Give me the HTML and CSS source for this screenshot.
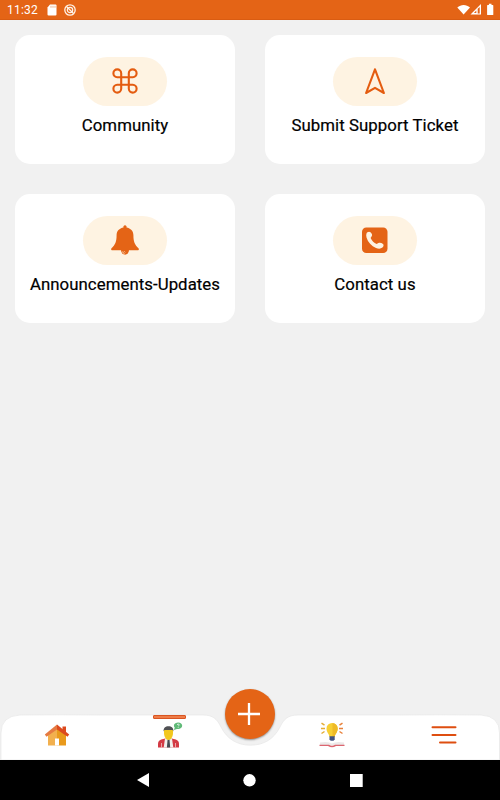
FILE: index.html
```html
<!DOCTYPE html>
<html lang="en">
<head>
    <meta charset="UTF-8">
    <title>Support</title>
    <link rel="stylesheet" href="styles.css">
</head>
<body>
<div id="screen">
    <div class="status">
        <span class="time">11:32</span>
        <svg class="sd" width="10" height="12" viewBox="0 0 10 12">
            <path d="M3 0.5h5.5a1 1 0 0 1 1 1v9a1 1 0 0 1-1 1h-7a1 1 0 0 1-1-1V3.5z" fill="#fff"/>
            <path d="M4 1.8v2M6 1.8v2M8 1.8v2" stroke="#e8a070" stroke-width="0.8"/>
        </svg>
        <svg class="sync" width="12" height="12" viewBox="0 0 12 12" fill="none" stroke="#fff3e8">
            <circle cx="6" cy="6" r="5.2" stroke-width="1.3"/>
            <circle cx="6" cy="6" r="2.7" stroke-width="1.2"/>
            <path d="M2.5 2.5l7 7" stroke-width="1.3"/>
        </svg>
        <svg class="signals" width="38" height="14" viewBox="0 0 38 14">
            <path d="M0.3 4.6C3.9 1.2 9.4 1.2 13 4.6L6.6 11.6z" fill="#fff"/>
            <path d="M24 1v10.5H13.5z" fill="#fff"/>
            <path d="M19.3 7.5v2.5h-2.4z" fill="#e46416"/>
            <path d="M20.7 5.8v4.8h2V4z" fill="#e46416"/>
            <path d="M30.7 2h1.2V0.8h2.6V2h1.2q.6 0 .6.6v8.8q0 .6-.6.6h-5q-.6 0-.6-.6V2.6q0-.6.6-.6z" fill="#fff"/>
        </svg>
    </div>

    <div class="cards">
        <div class="card">
            <div class="pill">
                <svg width="26" height="26" viewBox="0 0 26 26" fill="none" stroke="#e45c10" stroke-width="2.1">
                    <path d="M9.2 9.2h7.6v7.6H9.2zM9.2 9.2H5.2A3.9 3.9 0 1 1 9.2 5.2zM16.8 9.2V5.2a3.9 3.9 0 1 1 4 4zM16.8 16.8h4a3.9 3.9 0 1 1-4 4zM9.2 16.8v4a3.9 3.9 0 1 1-4-4z"/>
                </svg>
            </div>
            <p>Community</p>
        </div>
        <div class="card">
            <div class="pill">
                <svg width="24" height="28" viewBox="0 0 24 28" fill="none" stroke="#e45c10" stroke-width="2.1" stroke-linejoin="round">
                    <path d="M12 2.3L3.1 26L12 20.9L20.9 26z"/>
                </svg>
            </div>
            <p>Submit Support Ticket</p>
        </div>
        <div class="card">
            <div class="pill">
                <svg width="28" height="32" viewBox="0 0 28 32">
                    <path d="M14 1.2a1.6 1.6 0 0 1 1.5 2.2C19.6 4.1 22.4 7 22.4 11c0 7 1.4 9.7 5.1 13.3.7.9.3 2-.8 2H1.3c-1.1 0-1.5-1.1-.8-2C4.2 20.7 5.6 18 5.6 11c0-4 2.8-6.9 6.9-7.6A1.6 1.6 0 0 1 14 1.2z" fill="#e46416"/>
                    <path d="M10 26h8a4 4.7 0 0 1-8 0z" fill="#e46416"/>
                    <path d="M11.5 27.5q.4 1.8 2.2 2.4M13 27.2l1.2 1.2" fill="none" stroke="#fef3e2" stroke-width="0.7"/>
                </svg>
            </div>
            <p>Announcements-Updates</p>
        </div>
        <div class="card">
            <div class="pill">
                <svg width="26" height="26" viewBox="0 0 26 26">
                    <rect x="0" y="0.4" width="25.5" height="25.6" rx="4.3" fill="#e46416"/>
                    <path d="M4.5 6.5C5 4.8 7.2 4 8.5 5.2c1.3 1.1 2.2 2.7 1.2 4.1L8.6 11c1.4 3 3.4 4.8 6 5.9l1.8-1c1.6-.6 3.2 0 4.6 1 1 1 .6 2.7-.6 3.7-1.6 1.3-4 1.4-6.4.3C9.4 18.9 6 15.3 4.5 10.4c-.4-1.4-.4-2.7 0-3.9z" fill="#fef3e2"/>
                </svg>
            </div>
            <p>Contact us</p>
        </div>
    </div>

    <div class="tabbar">
        <svg class="tabbar-bg" width="500" height="47" viewBox="0 0 500 47">
            <path d="M1 47V20Q1 3 20 2Q60 1.6 100 2H203C213 2 217 6 221 14C227 26 237 32.2 250.5 32.2S274 26 280 14C284 6 288 2 298 2H400Q440 1.6 481 2Q499.5 3 499.5 20V47z" fill="#fff" stroke="#e6e6e6" stroke-width="0.7"/>
        </svg>
        <div class="tab">
            <svg width="26" height="22" viewBox="0 0 26 22">
                <path d="M18.5 2.5h3.5v7h-3.5z" fill="#dc4a1e"/>
                <path d="M4 10.5L13 3v18.5H4z" fill="#f2b04e"/>
                <path d="M13 3l9 7.5v11h-9z" fill="#e99a1c"/>
                <path d="M11 14.5h4v7h-4z" fill="#fff"/>
                <path d="M13 0.5v5L2.5 12.8 0.8 10.5z" fill="#e57a42"/>
                <path d="M13 0.5v5l10.5 7.3 1.7-2.3z" fill="#dc4a1e"/>
            </svg>
        </div>
        <div class="tab selected">
            <svg width="26" height="26" viewBox="0 0 26 26">
                <path d="M1 25.5v-3.3c0-3.6 2.5-4.6 7-5.6h7c4.5 1 7 2 7 5.6v3.3z" fill="#d33a44"/>
                <path d="M4.5 21v4.5M18.5 21v4.5" stroke="#ecc0c2" stroke-width="0.8"/>
                <path d="M8 16.5h7l1.3 9H6.7z" fill="#f2f0ed"/>
                <path d="M10.6 17.5h1.9l.7 8h-3.3z" fill="#454b52"/>
                <path d="M7 8h9v3c0 3.6-2 7-4.5 7S7 14.6 7 11z" fill="#f2c71f"/>
                <path d="M6.6 9.5C6.3 6 8.4 4.3 11.5 4.3s5.2 1.7 4.9 5.2L15.6 8H7.4z" fill="#505154"/>
                <path d="M17 8l.7-2.4C15.7 3 18 .6 21 .5c2.7 0 4.2 1.3 4.2 3.3 0 2.2-2.3 3.5-5.2 3.1z" fill="#60ba78"/>
                <path d="M20 2.6q1.4-1 2.2 0 .2.9-.9 1.4M21.2 5.1v.7" fill="none" stroke="#fff" stroke-width="0.8"/>
            </svg>
        </div>
        <button class="fab">
            <svg width="22" height="22" viewBox="0 0 22 22"><path d="M11 0v22M0 11h22" stroke="#fff" stroke-width="2.3"/></svg>
        </button>
        <div class="tab">
            <svg width="26" height="26" viewBox="0 0 26 26">
                <path d="M1 20.5q8-1.5 12 1 4-2.5 12-1v2.8H1z" fill="#ece9e9"/>
                <path d="M0.5 22.7H10q3 2.2 6 0h9.5v1.2H17q-4 2.6-8 0H.5z" fill="#dc6670"/>
                <path d="M7.5 6.5a5.6 5.6 0 0 1 11.2 0c0 4-2.9 5.5-3 8.5h-5.2c-.1-3-3-4.5-3-8.5z" fill="#f7cf34"/>
                <path d="M13.5 1a5.6 5.6 0 0 1 5.2 5.5c0 4-2.9 5.5-3 8.5h-2.2z" fill="#eeba27"/>
                <path d="M10.5 14.2h5.2v3.3l-1.2 1.2h-2.8l-1.2-1.2z" fill="#405282"/>
                <path d="M2.5 1.2l3 2M2 6.5h4M2.5 11.5l3-2" stroke="#e5ad35" stroke-width="1.5"/>
                <path d="M23.5 1.2l-3 2M24 6.5h-4M23.5 11.5l-3-2" stroke="#e8813b" stroke-width="1.5"/>
            </svg>
        </div>
        <div class="tab">
            <svg width="26" height="20" viewBox="0 0 26 20" stroke="#de4e10" stroke-width="2" stroke-linecap="round">
                <path d="M1.5 2.2h23M1.5 9.9h23M9 17.6h15.5"/>
            </svg>
        </div>
    </div>

    <div class="sysnav">
        <svg width="12" height="14" viewBox="0 0 12 14"><path d="M12 0v14L0 7z" fill="#fff"/></svg>
        <svg width="13" height="13" viewBox="0 0 13 13"><circle cx="6.5" cy="6.3" r="6.2" fill="#fff"/></svg>
        <svg width="13" height="13" viewBox="0 0 13 13"><rect width="12.7" height="13" fill="#fff"/></svg>
    </div>
</div>
</body>
</html>
```
FILE: styles.css
```css
*{
    margin: 0;
    padding: 0;
    box-sizing: border-box;
}
body{
    font-family: Roboto, sans-serif;
    background: #f1f1f1;
}
svg{
    display: block;
}
#screen{
    width: 500px;
    height: 800px;
    display: flex;
    flex-direction: column;
    overflow: hidden;
}
.status{
    height: 20px;
    padding: 0 5px 0 7px;
    display: flex;
    align-items: center;
    background: #e46416;
    border-bottom: 1px solid #d95c12;
    color: #fff;
}
.time{
    width: 40px;
    font-size: 12px;
    line-height: 20px;
    letter-spacing: 0.2px;
}
.sync{
    margin-left: 7px;
}
.signals{
    margin-left: auto;
}
.cards{
    flex: 1;
    display: grid;
    grid-template-columns: 220px 220px;
    grid-auto-rows: 129px;
    gap: 30px;
    padding: 15px;
    align-content: start;
}
.card{
    display: flex;
    flex-direction: column;
    align-items: center;
    padding-top: 22px;
    background: #fff;
    border-radius: 15px;
}
.pill{
    width: 84px;
    height: 48.5px;
    padding-bottom: 0.5px;
    display: flex;
    align-items: center;
    justify-content: center;
    background: #fef3e2;
    border-radius: 25px;
}
.card p{
    margin-top: 9.5px;
    font-size: 16.8px;
    font-weight: 400;
    line-height: 21px;
    letter-spacing: 0.06px;
    white-space: nowrap;
    color: #000;
    -webkit-text-stroke: 0.2px #000;
}
.tabbar{
    position: relative;
    height: 45px;
    padding: 0 0 0 1px;
    display: grid;
    grid-template-columns: 112px 112px 51px 112px 112px;
}
.tabbar-bg{
    position: absolute;
    left: 0;
    bottom: 0;
}
.tab{
    position: relative;
    height: 40px;
    display: flex;
    align-items: center;
    justify-content: center;
}
.selected svg{
    margin-left: 1px;
}
.selected::before{
    content: "";
    position: absolute;
    top: 0;
    left: 39.5px;
    width: 31px;
    height: 2px;
    border: 1px solid #d95522;
    border-radius: 1px;
    background: #ee7c48;
}
.fab{
    position: relative;
    top: -26px;
    width: 50px;
    height: 50px;
    margin-left: 0.4px;
    display: flex;
    align-items: center;
    justify-content: center;
    border: 0;
    border-radius: 50%;
    background: #e46416;
    box-shadow: 0 1px 2px rgba(0,0,0,0.4);
}
.fab svg{
    margin-left: -2px;
}
.sysnav{
    height: 40px;
    padding: 0 137px;
    display: flex;
    align-items: center;
    justify-content: space-between;
    background: #000;
}
```
